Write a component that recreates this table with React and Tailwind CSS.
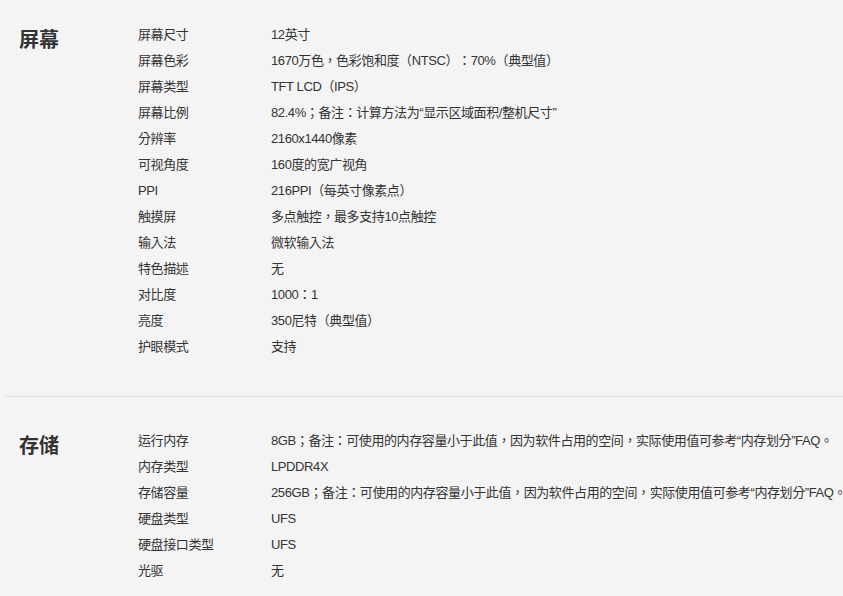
const sections = [
  {
    title: '屏幕',
    rows: [
      ['屏幕尺寸', '12英寸'],
      ['屏幕色彩', '1670万色，色彩饱和度（NTSC）：70%（典型值）'],
      ['屏幕类型', 'TFT LCD（IPS）'],
      ['屏幕比例', '82.4%；备注：计算方法为“显示区域面积/整机尺寸”'],
      ['分辨率', '2160x1440像素'],
      ['可视角度', '160度的宽广视角'],
      ['PPI', '216PPI（每英寸像素点）'],
      ['触摸屏', '多点触控，最多支持10点触控'],
      ['输入法', '微软输入法'],
      ['特色描述', '无'],
      ['对比度', '1000：1'],
      ['亮度', '350尼特（典型值）'],
      ['护眼模式', '支持'],
    ],
  },
  {
    title: '存储',
    rows: [
      ['运行内存', '8GB；备注：可使用的内存容量小于此值，因为软件占用的空间，实际使用值可参考“内存划分”FAQ。'],
      ['内存类型', 'LPDDR4X'],
      ['存储容量', '256GB；备注：可使用的内存容量小于此值，因为软件占用的空间，实际使用值可参考“内存划分”FAQ。'],
      ['硬盘类型', 'UFS'],
      ['硬盘接口类型', 'UFS'],
      ['光驱', '无'],
    ],
  },
]

function SpecSection({ title, rows, first }) {
  return (
    <section
      className={`flex border-b border-[#dcdcdc] pl-[14px] ${
        first ? 'pt-[22px] pb-[36px]' : 'pt-[31px] pb-[36px]'
      }`}
    >
      <h2 className="mt-[6px] w-[119px] shrink-0 text-[20px] font-bold leading-[24px] text-[#333]">
        {title}
      </h2>
      <div className="min-w-0 flex-1">
        {rows.map(([label, value]) => (
          <div
            key={label}
            className="flex text-[13px] leading-[26px] tracking-[-0.4px] text-[#333] [text-spacing-trim:space-all]"
          >
            <span className="w-[133px] shrink-0 whitespace-nowrap">{label}</span>
            <span className="whitespace-nowrap">{value}</span>
          </div>
        ))}
      </div>
    </section>
  )
}

export default function App() {
  return (
    <div
      className="h-[596px] w-[843px] overflow-hidden bg-[#f4f4f4] pl-[5px]"
      style={{ fontFamily: '"Liberation Sans", "Noto Sans CJK TC", sans-serif' }}
    >
      {sections.map((s, i) => (
        <SpecSection key={s.title} title={s.title} rows={s.rows} first={i === 0} />
      ))}
    </div>
  )
}
